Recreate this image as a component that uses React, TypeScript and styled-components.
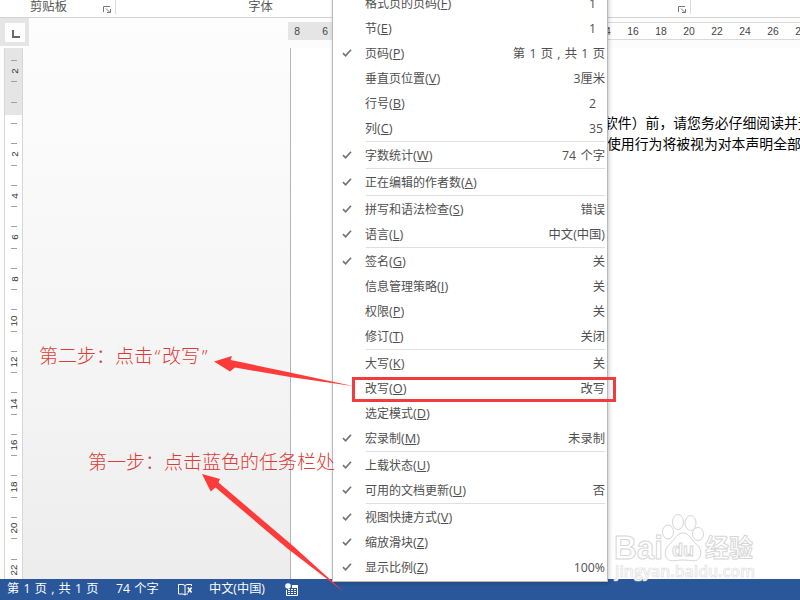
import React from "react";
import styled, { createGlobalStyle } from "styled-components";

const Global = createGlobalStyle`
  * { box-sizing: border-box; }
  body { margin: 0; background: #fff; }
`;

const cjk = `"Open Sans", "Noto Sans CJK SC", sans-serif`;

const Window = styled.div`
  position: relative;
  display: flex;
  flex-direction: column;
  width: 800px;
  height: 600px;
  overflow: hidden;
  background: #fdfdfd;
  font: 12px ${cjk};
  color: #444;
`;

const Ribbon = styled.header`
  display: flex;
  height: 18px;
  flex: none;
  background: #fff;
  border-bottom: 1px solid #d2d2d2;
  overflow: hidden;
`;

const Group = styled.div<{ $width: number }>`
  position: relative;
  display: flex;
  justify-content: center;
  width: ${(p) => p.$width}px;
  height: 14px;
  flex: none;
  border-right: 1px solid #dcdcdc;
`;

const GroupName = styled.span<{ $shift: number }>`
  margin-top: -2px;
  margin-left: ${(p) => p.$shift}px;
  line-height: 18px;
  font-size: 12.3px;
  color: #555;
`;

const Launcher = styled.svg`
  position: absolute;
  right: 4px;
  bottom: 1px;
`;

const Workspace = styled.main`
  display: flex;
  flex: 1;
  min-height: 0;
`;

const Side = styled.aside`
  position: relative;
  z-index: 1;
  width: 29px;
  flex: none;
  display: flex;
  flex-direction: column;
`;

const TabCorner = styled.div`
  display: grid;
  place-items: center;
  height: 28px;
  margin-bottom: 2px;
  flex: none;
  background: #e5e5e5;
`;

const TabStop = styled.div`
  display: grid;
  place-items: center;
  width: 20px;
  height: 19px;
  padding: 4px 0 0 2px;
  background: #fdfdfd;
`;

const VRuler = styled.div`
  flex: 1;
  width: 19px;
  margin-left: 4px;
  padding-top: 2.5px;
  overflow: hidden;
  border: solid #d6d6d6;
  border-width: 0 1px;
  background: linear-gradient(#e5e5e5 67px, #fff 67px);
`;

const VCell = styled.div`
  display: flex;
  flex-direction: column;
  align-items: center;
  justify-content: space-between;
  height: 41.55px;
  padding: 9.5px 0 9.6px;
`;

const Tick = styled.i`
  width: 6px;
  height: 1px;
  background: #a0a0a0;
`;

const VNumber = styled.span`
  display: grid;
  place-items: center;
  height: 12px;
  transform: rotate(-90deg);
  font: 9.8px "Liberation Sans", sans-serif;
  color: #333;
`;

const Canvas = styled.div`
  flex: 1;
  min-width: 0;
  display: flex;
  flex-direction: column;
  margin-left: -6px;
  background: linear-gradient(#fdfdfd, #f5f5f5 60%, #ededed);
`;

const HRuler = styled.div`
  display: flex;
  height: 18px;
  margin: 4px 0 8px 265px;
  flex: none;
`;

const HRulerPart = styled.div<{ $shaded?: boolean }>`
  display: flex;
  flex: none;
  align-items: center;
  width: ${(p) => (p.$shaded ? 45 : 467)}px;
  padding-left: ${(p) => (p.$shaded ? 0 : 263)}px;
  background: ${(p) => (p.$shaded ? "#e5e5e5" : "#fff")};
  border: solid ${(p) => (p.$shaded ? "#e5e5e5" : "#dadada")};
  border-width: 1px 0;
`;

const HNumber = styled.span`
  width: 28px;
  flex: none;
  margin-left: -5px;
  margin-right: 5px;
  text-align: center;
  font: 10.3px "Liberation Sans", sans-serif;
  color: #444;
`;

const Page = styled.article`
  flex: 1;
  margin-left: 267px;
  padding: 64px 0 0 301px;
  border-left: 1px solid #b4b4b4;
  background: #fff;
  overflow: hidden;
`;

const Line = styled.p<{ $indent: number }>`
  margin: 0 0 0 ${(p) => p.$indent}px;
  line-height: 21px;
  white-space: nowrap;
  font-size: 13.85px;
  font-family: "Noto Sans CJK SC", sans-serif;
  color: #000;
`;

const StatusBar = styled.footer`
  display: flex;
  align-items: center;
  height: 21px;
  flex: none;
  padding-left: 7px;
  background: #2a579a;
  color: #fff;
  font-size: 12.2px;
  word-spacing: 1.1px;
  white-space: pre;
`;

const Status = styled.span<{ $width: number }>`
  width: ${(p) => p.$width}px;
  flex: none;
  line-height: 20px;
  margin-top: -1px;
`;

const Menu = styled.nav`
  position: absolute;
  left: 332px;
  top: -9px;
  width: 276px;
  height: 591px;
  padding: 0 2px 0 5px;
  background: #fff;
  border: 1px solid #b9b9b9;
  border-top: 0;
  box-shadow: 1px 1px 4px rgba(0, 0, 0, 0.22);
`;

const Item = styled.div`
  display: flex;
  align-items: center;
  height: 25px;
  color: #505050;
  white-space: pre;
`;

const CheckSlot = styled.span`
  width: 27px;
  height: 12px;
  padding-left: 4px;
  flex: none;
  display: flex;
`;

const Label = styled.span`
  flex: 1;
  line-height: 25px;
`;

const Key = styled.span`
  font-size: 12.8px;
`;

const Value = styled.span<{ $narrow?: boolean }>`
  line-height: 25px;
  font-size: 12.3px;
  word-spacing: 1.1px;
  width: ${(p) => (p.$narrow ? "16px" : "auto")};
`;

const Separator = styled.div`
  height: 2px;
  margin-left: 28px;
  border-top: 1px solid #dedfe0;
`;

const Highlight = styled.div`
  position: absolute;
  left: 352px;
  top: 377px;
  width: 264px;
  height: 25px;
  border: 3px solid #f03c3e;
`;

const Note = styled.div<{ $x: number; $y: number }>`
  position: absolute;
  left: ${(p) => p.$x}px;
  top: ${(p) => p.$y}px;
  line-height: 26px;
  white-space: nowrap;
  font-size: 19px;
  font-weight: 300;
  font-family: "Noto Sans CJK SC", sans-serif;
  color: #dc3c38;
`;

const Quote = styled.span`
  display: inline-block;
  width: 9px;
  text-align: center;
  font-family: "Open Sans", sans-serif;
`;

const Arrows = styled.svg`
  position: absolute;
  left: 0;
  top: 0;
  pointer-events: none;
`;

const Watermark = styled.svg`
  position: absolute;
  left: 610px;
  top: 508px;
`;

type Entry = { label: string; k: string; value?: string; on?: boolean; narrow?: boolean };

const sections: Entry[][] = [
  [
    { label: "格式页的页码", k: "F", value: "1", narrow: true },
    { label: "节", k: "E", value: "1", narrow: true },
    { label: "页码", k: "P", value: "第 1 页 , 共 1 页", on: true },
    { label: "垂直页位置", k: "V", value: "3厘米" },
    { label: "行号", k: "B", value: "2", narrow: true },
    { label: "列", k: "C", value: "35", narrow: true },
  ],
  [{ label: "字数统计", k: "W", value: "74 个字", on: true }],
  [{ label: "正在编辑的作者数", k: "A", on: true }],
  [
    { label: "拼写和语法检查", k: "S", value: "错误", on: true },
    { label: "语言", k: "L", value: "中文(中国)", on: true },
  ],
  [
    { label: "签名", k: "G", value: "关", on: true },
    { label: "信息管理策略", k: "I", value: "关" },
    { label: "权限", k: "P", value: "关" },
    { label: "修订", k: "T", value: "关闭" },
  ],
  [
    { label: "大写", k: "K", value: "关" },
    { label: "改写", k: "O", value: "改写" },
    { label: "选定模式", k: "D" },
    { label: "宏录制", k: "M", value: "未录制", on: true },
  ],
  [
    { label: "上载状态", k: "U", on: true },
    { label: "可用的文档更新", k: "U", value: "否", on: true },
  ],
  [
    { label: "视图快捷方式", k: "V", on: true },
    { label: "缩放滑块", k: "Z", on: true },
    { label: "显示比例", k: "Z", value: "100%", on: true },
  ],
];

const vNumbers = ["2", "", "2", "4", "6", "8", "10", "12", "14", "16", "18", "20", "22"];

const LauncherIcon = () => (
  <Launcher width="8" height="7" viewBox="0 0 8 7" fill="none" stroke="#777">
    <path d="M.5 6V.5H7M3 2.500l3.500 3.500M7.500 3v3.500H4" />
  </Launcher>
);

const CheckIcon = () => (
  <svg width="10" height="10" viewBox="0 0 10 10" fill="none" stroke="#747474" strokeWidth="1.7">
    <path d="M1 5.200l2.600 2.600L9 1.800" />
  </svg>
);

const BookIcon = () => (
  <svg width="15" height="13" viewBox="0 0 15 13" fill="none" stroke="#fff">
    <path d="M7 12V2.500Q5 1 3 1.500H.500v9.500H5L7 12l1.500-1H10M7 2.500Q9 1 11 1.500h2.500V3" />
    <path d="M9.800 4.500l3.800 5M13.600 4.500l-3.800 5" strokeWidth="1.500" />
  </svg>
);

const Language = styled(Status)`
  padding-left: 16px;
`;

const MacroIcon = () => (
  <svg width="14" height="13" viewBox="0 0 14 13">
    <circle cx="3" cy="3" r="2.800" fill="#fff" />
    <path d="M7 2.500h5.500v10h-11V7" fill="none" stroke="#fff" />
    <path d="M7 2h6v3H7z" fill="#fff" />
    <path d="M3 6.500h2m1 0h2m1 0h2M3 8.500h2m1 0h2m1 0h2M3 10.500h2m1 0h2m1 0h2" stroke="#fff" />
  </svg>
);

export default function App() {
  return (
    <Window>
      <Global />
      <Ribbon>
        <Group $width={116}>
          <GroupName $shift={-18}>剪贴板</GroupName>
          <LauncherIcon />
        </Group>
        <Group $width={290}>
          <GroupName $shift={0}>字体</GroupName>
        </Group>
        <Group $width={285}>
          <LauncherIcon />
        </Group>
      </Ribbon>
      <Workspace>
        <Side>
          <TabCorner>
            <TabStop>
              <svg width="8" height="8" viewBox="0 0 8 8">
                <path d="M1 0v7h7" fill="none" stroke="#666" strokeWidth="2" />
              </svg>
            </TabStop>
          </TabCorner>
          <VRuler>
            {vNumbers.map((n, i) => (
              <VCell key={i}>
                <Tick />
                <VNumber>{n}</VNumber>
                <Tick />
              </VCell>
            ))}
          </VRuler>
        </Side>
        <Canvas>
          <HRuler>
            <HRulerPart $shaded>
              {["8", "6"].map((n) => (
                <HNumber key={n}>{n}</HNumber>
              ))}
            </HRulerPart>
            <HRulerPart>
              {["14", "16", "18", "20", "22", "24", "26", "28"].map((n) => (
                <HNumber key={n}>{n}</HNumber>
              ))}
            </HRulerPart>
          </HRuler>
          <Page>
            <Line $indent={12}>软件）前，请您务必仔细阅读并无</Line>
            <Line $indent={15}>使用行为将被视为对本声明全部内</Line>
          </Page>
        </Canvas>
      </Workspace>
      <StatusBar>
        <Status $width={109}>第 1 页 , 共 1 页</Status>
        <Status $width={62}>74 个字</Status>
        <BookIcon />
        <Language $width={92}>中文(中国)</Language>
        <MacroIcon />
      </StatusBar>

      <Menu>
        {sections.map((items, s) => (
          <React.Fragment key={s}>
            {s > 0 && <Separator />}
            {items.map((it) => (
              <Item key={it.label}>
                <CheckSlot>{it.on && <CheckIcon />}</CheckSlot>
                <Label>
                  {it.label}
                  <Key>
                    (<u>{it.k}</u>)
                  </Key>
                </Label>
                {it.value && <Value $narrow={it.narrow}>{it.value}</Value>}
              </Item>
            ))}
          </React.Fragment>
        ))}
      </Menu>

      <Highlight />
      <Note $x={39} $y={342}>
        第二步：点击<Quote>“</Quote>改写<Quote>”</Quote>
      </Note>
      <Note $x={88} $y={448}>第一步：点击蓝色的任务栏处</Note>
      <Arrows width="800" height="600" viewBox="0 0 800 600" fill="#fd3b3a">
        <path d="M214 361.500L232 356L230.700 360L290 372.500L354 386.300L290 377L235 367.500L230 371.500Z" />
        <path d="M202 474L220 479L218.500 482.500L292 545L344 592L288 549L215.500 487.500L210.700 491.500Z" />
      </Arrows>

      <Watermark width="150" height="76" viewBox="0 0 150 76" fill="#fff" stroke="#d6d6d6">
        <g fontFamily="Liberation Sans, Noto Sans CJK SC, sans-serif" fontWeight="700">
          <text x="4" y="51" fontSize="33" textLength="49" lengthAdjust="spacingAndGlyphs">Bai</text>
          <ellipse cx="58" cy="24" rx="5.500" ry="7" />
          <ellipse cx="68" cy="14" rx="5.500" ry="7.500" />
          <ellipse cx="80.500" cy="15" rx="5.500" ry="7.500" />
          <ellipse cx="88" cy="26" rx="5.500" ry="6.500" />
          <path d="M73 25c-6 0-8 6-12 10-5 4-7 8-5 14 3 6 9 3 17 3 8 0 14 3 17-3 2-6 0-10-5-14-4-4-6-10-12-10Z" />
          <text x="62" y="48" fontSize="19" textLength="22" lengthAdjust="spacingAndGlyphs">du</text>
          <text x="95" y="49" fontSize="25" textLength="48" lengthAdjust="spacingAndGlyphs">经验</text>
        </g>
        <text x="5" y="69" fontFamily="Open Sans, sans-serif" fontSize="16" fontWeight="600" stroke="#dedede" strokeWidth=".7" textLength="140" lengthAdjust="spacingAndGlyphs">jingyan.baidu.com</text>
      </Watermark>
    </Window>
  );
}
